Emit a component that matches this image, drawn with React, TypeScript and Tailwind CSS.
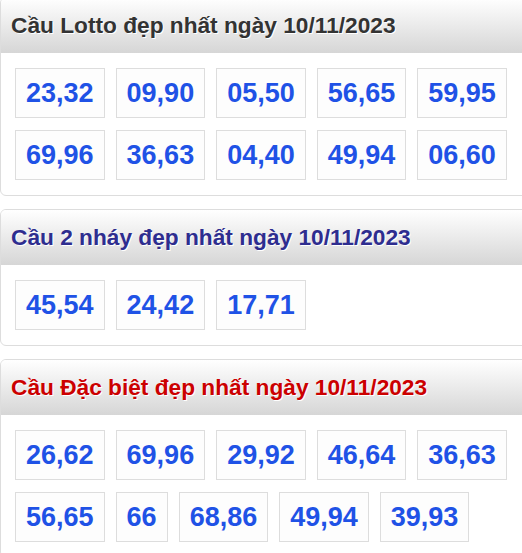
import React from "react";

const sections = [
  {
    title: "Cầu Lotto đẹp nhất ngày 10/11/2023",
    color: "text-[#333333]",
    numbers: ["23,32", "09,90", "05,50", "56,65", "59,95", "69,96", "36,63", "04,40", "49,94", "06,60"],
  },
  {
    title: "Cầu 2 nháy đẹp nhất ngày 10/11/2023",
    color: "text-[#2e2d8f]",
    numbers: ["45,54", "24,42", "17,71"],
  },
  {
    title: "Cầu Đặc biệt đẹp nhất ngày 10/11/2023",
    color: "text-[#cc0000]",
    numbers: ["26,62", "69,96", "29,92", "46,64", "36,63", "56,65", "66", "68,86", "49,94", "39,93"],
  },
];

function NumBox({ value }: { value: string }) {
  return (
    <div className="h-[50px] px-[10px] flex items-center border border-[#dddddd] bg-[#fdfdfd] text-[27px] font-bold text-[#1f52e6]">
      {value}
    </div>
  );
}

export default function App() {
  return (
    <div
      className="w-[522px] h-[553px] overflow-hidden bg-white"
      style={{ fontFamily: '"Liberation Sans", Arial, sans-serif' }}
    >
      <div className="mt-[-3px] w-[545px] flex flex-col gap-[13px]">
        {sections.map((s) => (
          <div key={s.title} className="border border-[#dddddd] rounded-[6px] overflow-hidden">
            <div className="h-[55px] pl-[10px] flex items-center bg-gradient-to-b from-white to-[#d6d6d6]">
              <h2
                className={`text-[22.7px] font-bold ${s.color}`}
                style={{ textShadow: "1px 1px 0 #ffffff" }}
              >
                {s.title}
              </h2>
            </div>
            <div className="pl-[14px] pt-[15px] pb-[15px] flex flex-wrap gap-x-[11px] gap-y-[12px]">
              {s.numbers.map((n, i) => (
                <NumBox key={i} value={n} />
              ))}
            </div>
          </div>
        ))}
      </div>
    </div>
  );
}
